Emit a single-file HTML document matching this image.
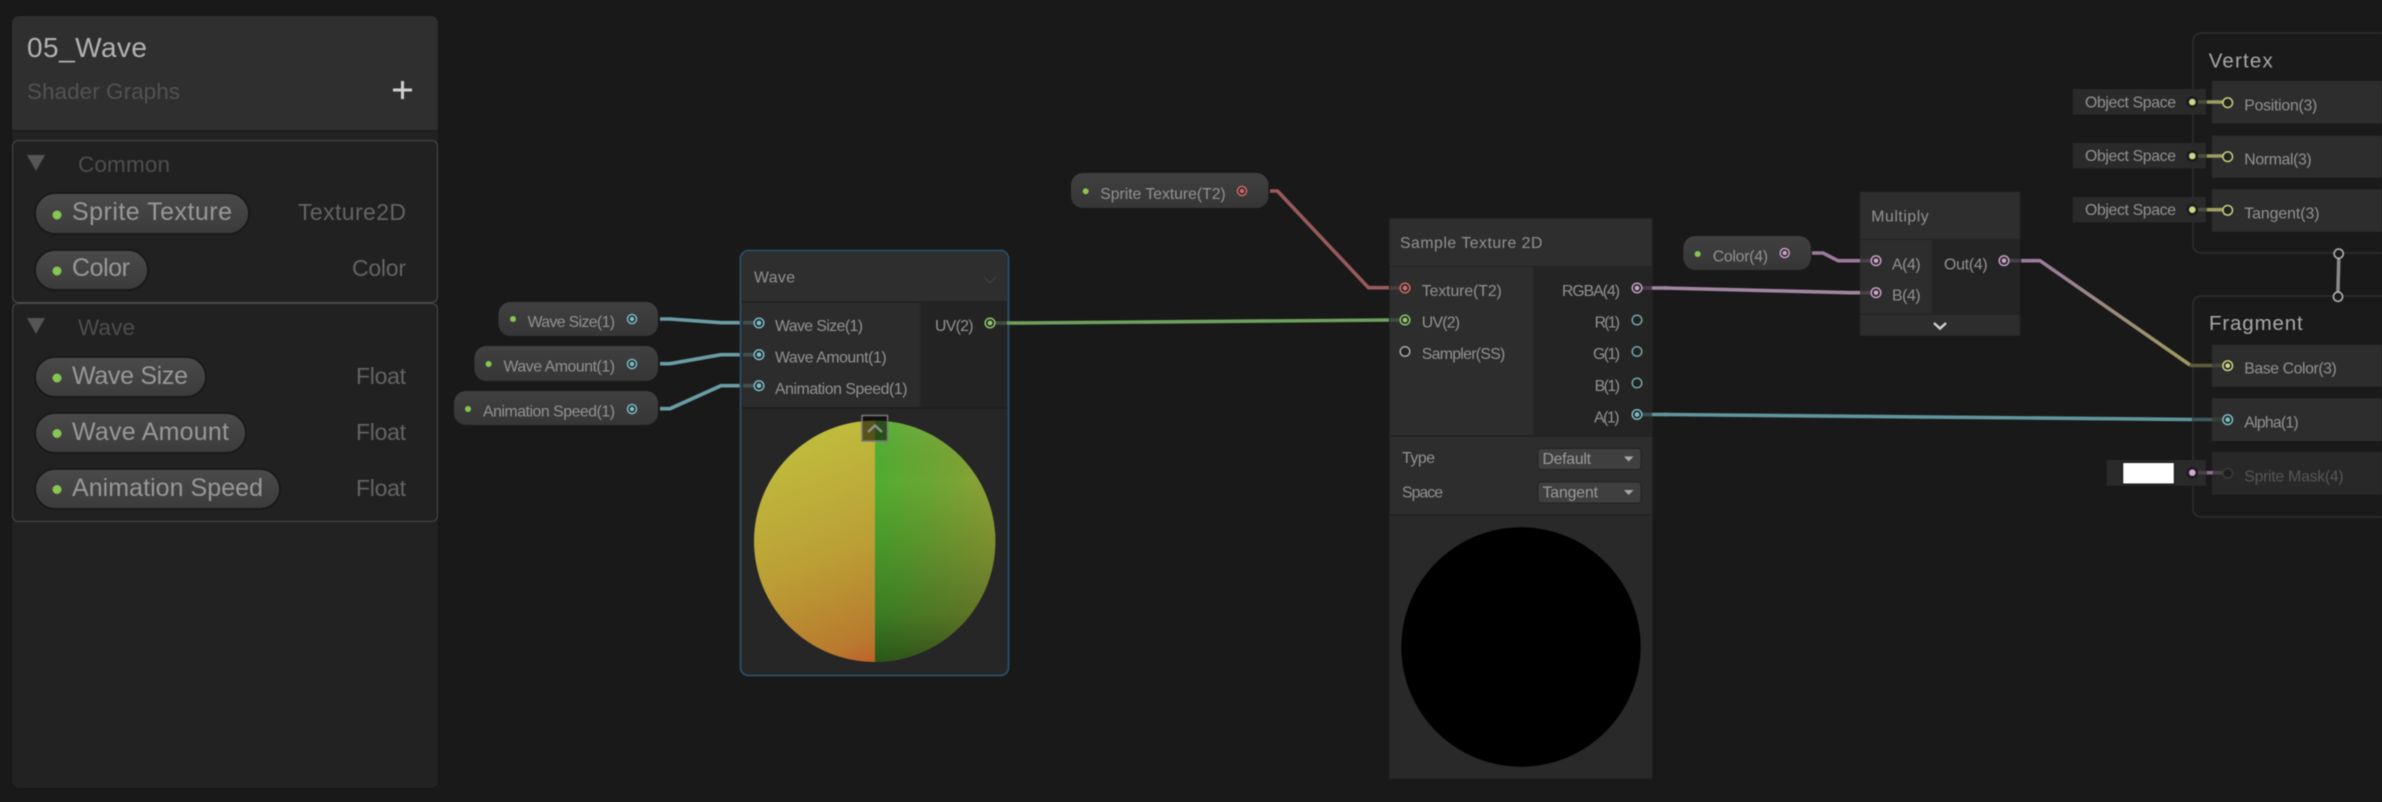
<!DOCTYPE html>
<html><head><meta charset="utf-8"><title>05_Wave Shader Graph</title>
<style>
html,body{margin:0;padding:0;background:#191919;width:2382px;height:802px;overflow:hidden}
svg{display:block;filter:blur(.4px)}
text{font-family:"Liberation Sans",sans-serif;white-space:pre}
.s15{font-size:15.8px;fill:#929292}
.s15d{font-size:15.8px;fill:#565656}
.s24{font-size:25px;fill:#989898}
.s22{font-size:23px;fill:#646464}
.e{fill:none;stroke-width:3.600;stroke-linejoin:round;stroke-linecap:butt}
.ring{fill:#212121;stroke-width:1.500}
</style></head><body>
<svg width="2382" height="802" viewBox="0 0 2382 802" xmlns="http://www.w3.org/2000/svg">
<defs>
<linearGradient id="pill" x1="0" y1="0" x2="0" y2="1"><stop offset="0" stop-color="#4a4a4a"/><stop offset="1" stop-color="#3b3b3b"/></linearGradient>
<linearGradient id="gp" x1="0" y1="0" x2="0" y2="1"><stop offset="0" stop-color="#404040"/><stop offset="1" stop-color="#363636"/></linearGradient>
<linearGradient id="base" gradientUnits="userSpaceOnUse" x1="2040" y1="261" x2="2190" y2="365"><stop offset="0" stop-color="#9c7b9c"/><stop offset="1" stop-color="#9c9c5c"/></linearGradient>
<linearGradient id="lhalf" gradientUnits="userSpaceOnUse" x1="805" y1="425" x2="905" y2="665"><stop offset="0" stop-color="#c0bf3e"/><stop offset=".5" stop-color="#bb9f35"/><stop offset=".85" stop-color="#b87a2e"/><stop offset="1" stop-color="#c74f28"/></linearGradient>
<linearGradient id="rhalf" gradientUnits="userSpaceOnUse" x1="875" y1="0" x2="996" y2="0"><stop offset="0" stop-color="#50ad30"/><stop offset=".5" stop-color="#6fa533"/><stop offset="1" stop-color="#8fa136"/></linearGradient>
<linearGradient id="rshade" gradientUnits="userSpaceOnUse" x1="0" y1="421" x2="0" y2="662"><stop offset="0" stop-color="#fff" stop-opacity=".06"/><stop offset=".25" stop-color="#000" stop-opacity="0"/><stop offset=".55" stop-color="#000" stop-opacity=".14"/><stop offset=".8" stop-color="#000" stop-opacity=".28"/><stop offset="1" stop-color="#000" stop-opacity=".5"/></linearGradient>
<clipPath id="lc"><rect x="750" y="415" width="125" height="255"/></clipPath>
<clipPath id="rc"><rect x="875" y="415" width="125" height="255"/></clipPath>
</defs>
<rect width="2382" height="802" fill="#191919"/>

<!-- sidebar -->
<rect x="11" y="15" width="428" height="774" rx="8" fill="#161616"/>
<rect x="12" y="16" width="426" height="772" rx="7" fill="#222"/>
<path d="M12 130V23a7 7 0 0 1 7-7H431a7 7 0 0 1 7 7V130Z" fill="#2f2f2f"/>
<rect x="12" y="130" width="426" height="2" fill="#1d1d1d"/>
<text x="27" y="57" font-size="28" fill="#b2b2b2" textLength="120">05_Wave</text>
<text x="27" y="99" font-size="22.500" fill="#525252" textLength="153">Shader Graphs</text>
<rect x="393" y="88.500" width="19" height="3" fill="#cfcfcf"/><rect x="401" y="81" width="3" height="18" fill="#cfcfcf"/>

<rect x="12.500" y="140.500" width="425" height="162" rx="6" fill="#212121" stroke="#4a4a4a"/>
<rect x="12.500" y="303.500" width="425" height="218" rx="6" fill="#212121" stroke="#4a4a4a"/>
<path d="M27 155H45L36 171Z" fill="#555"/>
<text x="78" y="172" font-size="22.500" fill="#4e4e4e" textLength="92">Common</text>
<path d="M27 318H45L36 334Z" fill="#555"/>
<text x="78" y="335" font-size="22.500" fill="#4e4e4e" textLength="57">Wave</text>

<rect x="35" y="193" width="214" height="41" rx="20.500" fill="url(#pill)" stroke="#181818" stroke-width="1.800"/>
<circle cx="57" cy="215" r="4.500" fill="#86c652"/>
<text class="s24" x="72" y="220" textLength="160">Sprite Texture</text>
<text class="s22" x="298" y="220" textLength="108">Texture2D</text>

<rect x="35" y="250" width="113" height="40" rx="20" fill="url(#pill)" stroke="#181818" stroke-width="1.800"/>
<circle cx="57" cy="271" r="4.500" fill="#86c652"/>
<text class="s24" x="72" y="276" textLength="58">Color</text>
<text class="s22" x="352" y="276" textLength="54">Color</text>

<rect x="35" y="357" width="171" height="40" rx="20" fill="url(#pill)" stroke="#181818" stroke-width="1.800"/>
<circle cx="57" cy="378" r="4.500" fill="#86c652"/>
<text class="s24" x="72" y="384" textLength="116">Wave Size</text>
<text class="s22" x="356" y="384" textLength="50">Float</text>

<rect x="35" y="413" width="211" height="40" rx="20" fill="url(#pill)" stroke="#181818" stroke-width="1.800"/>
<circle cx="57" cy="433.500" r="4.500" fill="#86c652"/>
<text class="s24" x="72" y="440" textLength="157">Wave Amount</text>
<text class="s22" x="356" y="440" textLength="50">Float</text>

<rect x="35" y="469" width="245" height="40" rx="20" fill="url(#pill)" stroke="#181818" stroke-width="1.800"/>
<circle cx="57" cy="489.500" r="4.500" fill="#86c652"/>
<text class="s24" x="72" y="496" textLength="191">Animation Speed</text>
<text class="s22" x="356" y="496" textLength="50">Float</text>

<!-- edges under nodes -->
<path class="e" stroke="#6a9da5" d="M660 319H670L721 322.700H745"/>
<path class="e" stroke="#6a9da5" d="M660 363.700H670L721 354.700H745"/>
<path class="e" stroke="#6a9da5" d="M660 408.700H670L721 385.700H745"/>
<path class="e" stroke="#995a5a" d="M1270 191H1277.500L1368.400 287.700H1390"/>
<path class="e" stroke="#6f9f5d" d="M1022 323L1390 320"/>
<path class="e" stroke="#a186a1" d="M1664 288L1850 292.700H1860"/>
<path class="e" stroke="#9c7b9c" d="M1812 253H1823L1838 260.700H1860"/>
<path class="e" stroke="#5f959c" d="M1664 414.500L2193 419.500"/>
<path class="e" stroke="url(#base)" d="M2032 260.700H2040L2190 365"/>

<!-- graph properties -->
<rect x="498.500" y="302" width="159.500" height="34" rx="12" fill="url(#gp)"/>
<circle cx="513" cy="319" r="3" fill="#86c652"/>
<text class="s15" x="527.600" y="327" textLength="87.400">Wave Size(1)</text>
<circle class="ring" cx="632" cy="319" r="4.500" stroke="#7dbcc6"/><circle cx="632" cy="319" r="2.300" fill="#7dbcc6"/>

<rect x="474.400" y="346" width="183.600" height="35" rx="12" fill="url(#gp)"/>
<circle cx="488.600" cy="364" r="3" fill="#86c652"/>
<text class="s15" x="503.500" y="371.700" textLength="111.500">Wave Amount(1)</text>
<circle class="ring" cx="632" cy="364" r="4.500" stroke="#7dbcc6"/><circle cx="632" cy="364" r="2.300" fill="#7dbcc6"/>

<rect x="454" y="391" width="204" height="34" rx="12" fill="url(#gp)"/>
<circle cx="468" cy="409" r="3" fill="#86c652"/>
<text class="s15" x="483" y="416.700" textLength="132">Animation Speed(1)</text>
<circle class="ring" cx="632" cy="409" r="4.500" stroke="#7dbcc6"/><circle cx="632" cy="409" r="2.300" fill="#7dbcc6"/>

<rect x="1071" y="173" width="197.400" height="35" rx="12" fill="url(#gp)"/>
<circle cx="1085.700" cy="191.300" r="3" fill="#86c652"/>
<text class="s15" x="1100.300" y="199" textLength="125.400">Sprite Texture(T2)</text>
<circle class="ring" cx="1242" cy="191" r="4.500" stroke="#d06a6a"/><circle cx="1242" cy="191" r="2.300" fill="#d06a6a"/>

<rect x="1683.300" y="236" width="127.700" height="34" rx="12" fill="url(#gp)"/>
<circle cx="1697.700" cy="254" r="3" fill="#86c652"/>
<text class="s15" x="1712.700" y="261.700" textLength="55.300">Color(4)</text>
<circle class="ring" cx="1784.700" cy="253" r="4.500" stroke="#c9a0c9"/><circle cx="1784.700" cy="253" r="2.300" fill="#c9a0c9"/>

<!-- Wave node -->
<rect x="740.500" y="250.500" width="268" height="425" rx="8" fill="#262626" stroke="#2a5068" stroke-width="1.800"/>
<path d="M742 301V258a6 6 0 0 1 6-6H1001a6 6 0 0 1 6 6V301Z" fill="#2e2e2e"/>
<rect x="742" y="301" width="265" height="2" fill="#222"/>
<rect x="742" y="303" width="178" height="104" fill="#2c2c2c"/>
<rect x="921" y="303" width="86" height="104" fill="#232323"/>
<rect x="742" y="407" width="265" height="2" fill="#1f1f1f"/>
<text class="s15" x="754" y="282.700" textLength="41">Wave</text>
<path d="M984 277L990 283L996 277" fill="none" stroke="#3e3e3e" stroke-width="1.500"/>
<path class="e" stroke="#3f4f50" d="M743 322.700H759M743 354.700H759M743 385.700H759"/>
<text class="s15" x="775" y="331" textLength="88">Wave Size(1)</text>
<text class="s15" x="775" y="362.700" textLength="111.600">Wave Amount(1)</text>
<text class="s15" x="775" y="394" textLength="132.500">Animation Speed(1)</text>
<circle class="ring" cx="759" cy="323" r="4.800" stroke="#7dbcc6"/><circle cx="759" cy="323" r="2.400" fill="#7dbcc6"/>
<circle class="ring" cx="759" cy="354.700" r="4.800" stroke="#7dbcc6"/><circle cx="759" cy="354.700" r="2.400" fill="#7dbcc6"/>
<circle class="ring" cx="759" cy="385.700" r="4.800" stroke="#7dbcc6"/><circle cx="759" cy="385.700" r="2.400" fill="#7dbcc6"/>
<text class="s15" x="935" y="331" textLength="38.500">UV(2)</text>
<path class="e" stroke="#3f4f3c" d="M990 323H1007"/>
<path class="e" stroke="#6f9f5d" d="M1007 323H1024"/>
<circle class="ring" cx="990" cy="323" r="4.800" stroke="#8fc870"/><circle cx="990" cy="323" r="2.400" fill="#8fc870"/>
<!-- sphere -->
<circle cx="874.700" cy="541.300" r="120.700" fill="url(#lhalf)" clip-path="url(#lc)"/>
<circle cx="874.700" cy="541.300" r="120.700" fill="url(#rhalf)" clip-path="url(#rc)"/>
<circle cx="874.700" cy="541.300" r="120.700" fill="url(#rshade)" clip-path="url(#rc)"/>
<rect x="862" y="415.500" width="25.500" height="25.500" fill="#000" fill-opacity=".55" stroke="#7a7a7a" stroke-width="1.500"/>
<path d="M868 432L875 425.500L882 432" fill="none" stroke="#8d8d8d" stroke-width="2.500"/>

<!-- Sample Texture 2D -->
<rect x="1389" y="218" width="263.500" height="561" fill="#232323"/>
<rect x="1390" y="219" width="262" height="47" fill="#2e2e2e"/>
<rect x="1390" y="267" width="143.500" height="168" fill="#2d2d2d"/>
<rect x="1535" y="267" width="117" height="168" fill="#242424"/>
<rect x="1390" y="437" width="262" height="77" fill="#2d2d2d"/>
<rect x="1390" y="516" width="262" height="262" fill="#292929"/>
<text class="s15" x="1400" y="248" textLength="142.400">Sample Texture 2D</text>
<path class="e" stroke="#4f3d3d" d="M1390 288H1405"/>
<path class="e" stroke="#3f4f3c" d="M1390 320H1405"/>
<circle class="ring" cx="1405" cy="288" r="4.800" stroke="#d06a6a"/><circle cx="1405" cy="288" r="2.400" fill="#d06a6a"/>
<circle class="ring" cx="1405" cy="320" r="4.800" stroke="#8fc870"/><circle cx="1405" cy="320" r="2.400" fill="#8fc870"/>
<circle class="ring" cx="1405" cy="351.500" r="4.800" stroke="#a8a8a8"/>
<text class="s15" x="1421.800" y="296" textLength="80">Texture(T2)</text>
<text class="s15" x="1421.800" y="327.700" textLength="38.200">UV(2)</text>
<text class="s15" x="1421.800" y="359" textLength="83.500">Sampler(SS)</text>
<text class="s15" x="1562" y="296" textLength="58">RGBA(4)</text>
<text class="s15" x="1594.600" y="327.700" textLength="25.400">R(1)</text>
<text class="s15" x="1593" y="359" textLength="27">G(1)</text>
<text class="s15" x="1594.600" y="391" textLength="25.400">B(1)</text>
<text class="s15" x="1594" y="422.700" textLength="25.500">A(1)</text>
<path class="e" stroke="#493f49" d="M1637 288H1652"/><path class="e" stroke="#a186a1" d="M1652 288H1668"/>
<path class="e" stroke="#3f4f50" d="M1637 414.500H1652"/><path class="e" stroke="#5f959c" d="M1652 414.500H1668"/>
<circle class="ring" cx="1637" cy="288" r="4.800" stroke="#c9a0c9"/><circle cx="1637" cy="288" r="2.400" fill="#c9a0c9"/>
<circle class="ring" cx="1637" cy="320" r="4.800" stroke="#6fa8b0"/>
<circle class="ring" cx="1637" cy="351.500" r="4.800" stroke="#6fa8b0"/>
<circle class="ring" cx="1637" cy="383" r="4.800" stroke="#6fa8b0"/>
<circle class="ring" cx="1637" cy="414.500" r="4.800" stroke="#7dbcc6"/><circle cx="1637" cy="414.500" r="2.400" fill="#7dbcc6"/>
<text class="s15" x="1402" y="463" textLength="33">Type</text>
<text class="s15" x="1402" y="497.300" textLength="41">Space</text>
<rect x="1538" y="448.500" width="103" height="21" rx="3" fill="#3f3f3f" stroke="#222"/>
<rect x="1538" y="482" width="103" height="21" rx="3" fill="#3f3f3f" stroke="#222"/>
<text x="1542.500" y="464" font-size="15.800" fill="#9a9a9a" textLength="48.500">Default</text>
<text x="1542.500" y="497.300" font-size="15.800" fill="#9a9a9a" textLength="55.500">Tangent</text>
<path d="M1624 456.500H1633.500L1628.700 461.500Z" fill="#a8a8a8"/>
<path d="M1624 490H1633.500L1628.700 495Z" fill="#a8a8a8"/>
<circle cx="1521" cy="647" r="119.700" fill="#000"/>

<!-- Multiply -->
<rect x="1860" y="191.700" width="160" height="144" fill="#232323"/>
<rect x="1860" y="192" width="160" height="47" fill="#2e2e2e"/>
<rect x="1860" y="240" width="72" height="73.500" fill="#2d2d2d"/>
<rect x="1933" y="240" width="87" height="73.500" fill="#242424"/>
<rect x="1860" y="315" width="160" height="20.700" fill="#2d2d2d"/>
<text class="s15" x="1871.300" y="221.700" textLength="57.400">Multiply</text>
<path class="e" stroke="#493f49" d="M1860 260.700H1876M1860 292.700H1876M2004 260.700H2020"/>
<path class="e" stroke="#9c7b9c" d="M2021 260.700H2034"/>
<circle class="ring" cx="1876" cy="260.700" r="4.800" stroke="#c9a0c9"/><circle cx="1876" cy="260.700" r="2.400" fill="#c9a0c9"/>
<circle class="ring" cx="1876" cy="292.700" r="4.800" stroke="#c9a0c9"/><circle cx="1876" cy="292.700" r="2.400" fill="#c9a0c9"/>
<circle class="ring" cx="2004" cy="260.700" r="4.800" stroke="#c9a0c9"/><circle cx="2004" cy="260.700" r="2.400" fill="#c9a0c9"/>
<text class="s15" x="1892" y="269.300" textLength="28.700">A(4)</text>
<text class="s15" x="1892" y="300.700" textLength="28.700">B(4)</text>
<text class="s15" x="1944" y="269.300" textLength="43.700">Out(4)</text>
<path d="M1934 323L1940 328.500L1946 323" fill="none" stroke="#d0d0d0" stroke-width="2.500"/>

<!-- Vertex context -->
<path d="M2382 33H2201a8 8 0 0 0-8 8V245a8 8 0 0 0 8 8H2382" fill="#1a1a1a" stroke="#2f2f2f" stroke-width="1.500"/>
<text x="2208.700" y="67.300" font-size="20.500" fill="#a8a8a8" textLength="64">Vertex</text>
<rect x="2212" y="81" width="170" height="42.500" fill="#2d2d2d"/>
<rect x="2212" y="135.700" width="170" height="42" fill="#2d2d2d"/>
<rect x="2212" y="189.300" width="170" height="42.400" fill="#2d2d2d"/>
<text class="s15" x="2244.300" y="110.700" textLength="73">Position(3)</text>
<text class="s15" x="2244.300" y="164.700" textLength="67.400">Normal(3)</text>
<text class="s15" x="2244.300" y="218.700" textLength="75.200">Tangent(3)</text>

<rect x="2072.700" y="89" width="133" height="25.500" fill="#2a2a2a"/>
<rect x="2072.700" y="143" width="133" height="25.300" fill="#2a2a2a"/>
<rect x="2072.700" y="197" width="133" height="25.300" fill="#2a2a2a"/>
<text class="s15" x="2085" y="107.300" textLength="91">Object Space</text>
<text class="s15" x="2085" y="161" textLength="91">Object Space</text>
<text class="s15" x="2085" y="215" textLength="91">Object Space</text>
<circle cx="2192.300" cy="102" r="6" fill="#1c1c1c"/><circle cx="2192.300" cy="102" r="3.300" fill="#cfd58a"/>
<circle cx="2192.300" cy="156" r="6" fill="#1c1c1c"/><circle cx="2192.300" cy="156" r="3.300" fill="#cfd58a"/>
<circle cx="2192.300" cy="209.700" r="6" fill="#1c1c1c"/><circle cx="2192.300" cy="209.700" r="3.300" fill="#cfd58a"/>
<path class="e" stroke="#4a4c3a" d="M2198 102H2207M2198 156H2207M2198 209.700H2207"/>
<path class="e" stroke="#9c9e62" d="M2207 102H2224M2207 156H2224M2207 209.700H2224"/>
<circle class="ring" cx="2227.700" cy="102.700" r="4.800" stroke="#c8cf7a"/>
<circle class="ring" cx="2227.700" cy="156.700" r="4.800" stroke="#c8cf7a"/>
<circle class="ring" cx="2227.700" cy="210.300" r="4.800" stroke="#c8cf7a"/>

<!-- Fragment context -->
<path d="M2382 296H2201a8 8 0 0 0-8 8V509a8 8 0 0 0 8 8H2382" fill="#1a1a1a" stroke="#2f2f2f" stroke-width="1.500"/>
<text x="2209" y="330" font-size="20.500" fill="#a8a8a8" textLength="93.700">Fragment</text>
<rect x="2212" y="344.700" width="170" height="42" fill="#2d2d2d"/>
<rect x="2212" y="398.300" width="170" height="42.700" fill="#2d2d2d"/>
<rect x="2212" y="452" width="170" height="42.700" fill="#282828"/>
<text class="s15" x="2244.300" y="373.300" textLength="92.500">Base Color(3)</text>
<text class="s15" x="2244.300" y="427.300" textLength="54.400">Alpha(1)</text>
<text class="s15d" x="2244.300" y="481.300" textLength="99.400">Sprite Mask(4)</text>
<path class="e" stroke="#5c5e3a" d="M2190 365.500H2212"/>
<path class="e" stroke="#44433a" d="M2212 365.500H2228"/>
<path class="e" stroke="#3f5a5e" d="M2193 419.500H2212"/>
<path class="e" stroke="#33403f" d="M2212 419.500H2228"/>
<circle class="ring" cx="2227.700" cy="365.700" r="4.800" stroke="#d0d684"/><circle cx="2227.700" cy="365.700" r="2.400" fill="#d0d684"/>
<circle class="ring" cx="2227.700" cy="419.700" r="4.800" stroke="#7dbcc6"/><circle cx="2227.700" cy="419.700" r="2.400" fill="#7dbcc6"/>
<rect x="2106.700" y="460" width="99" height="25.700" fill="#2a2a2a"/>
<rect x="2122.700" y="462.500" width="51.600" height="21.500" fill="#fff" stroke="#151515"/>
<circle cx="2192.300" cy="472.700" r="6" fill="#1c1c1c"/><circle cx="2192.300" cy="472.700" r="3.300" fill="#d2a8d2"/>
<path class="e" stroke="#4a3f4a" d="M2198 472.700H2207"/>
<path class="e" stroke="#8a6f8a" d="M2207 472.700H2213"/>
<path class="e" stroke="#4a3f4a" d="M2213 472.700H2224"/>
<circle cx="2227.700" cy="473.300" r="4.800" fill="#1f1f1f" stroke="#3a3a3a" stroke-width="1.600"/>

<!-- flow edge -->
<path d="M2338.700 258C2338.700 272 2338 280 2338 292" fill="none" stroke="#8a8a8a" stroke-width="3.500"/>
<circle cx="2338.700" cy="253.700" r="4.600" fill="#1a1a1a" stroke="#aeaeae" stroke-width="1.600"/>
<circle cx="2338" cy="296.700" r="4.600" fill="#1a1a1a" stroke="#aeaeae" stroke-width="1.600"/>
</svg>
</body></html>
